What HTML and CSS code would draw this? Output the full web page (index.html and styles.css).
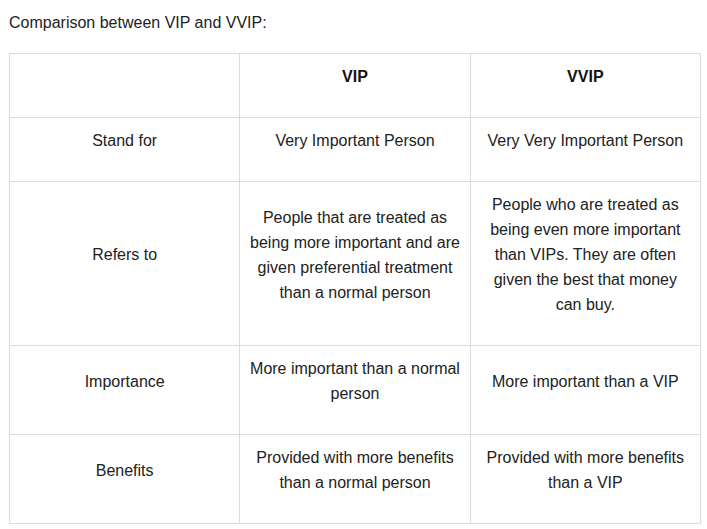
FILE: index.html
```html
<!DOCTYPE html>
<html>
<head>
<meta charset="utf-8">
<link rel="stylesheet" href="styles.css">
</head>
<body>
<div class="page">
  <p class="intro">Comparison between VIP and VVIP:</p>
  <table class="cmp">
    <colgroup><col class="c"><col class="c"><col class="c"></colgroup>
    <tr>
      <td><p></p></td>
      <td><p><strong>VIP</strong></p></td>
      <td><p><strong>VVIP</strong></p></td>
    </tr>
    <tr>
      <td><p>Stand for</p></td>
      <td><p>Very Important Person</p></td>
      <td><p>Very Very Important Person</p></td>
    </tr>
    <tr>
      <td><p>Refers to</p></td>
      <td><p>People that are treated as being more important and are given preferential treatment than a normal person</p></td>
      <td><p>People who are treated as being even more important than VIPs. They are often given the best that money can buy.</p></td>
    </tr>
    <tr>
      <td><p>Importance</p></td>
      <td><p>More important than a normal person</p></td>
      <td><p>More important than a VIP</p></td>
    </tr>
    <tr>
      <td><p>Benefits</p></td>
      <td><p>Provided with more benefits than a normal person</p></td>
      <td><p>Provided with more benefits than a VIP</p></td>
    </tr>
  </table>
</div>
</body>
</html>
```
FILE: styles.css
```css
html, body {
  margin: 0;
  padding: 0;
  background: #fff;
}
.page {
  padding: 10px 6px 0 9px;
  font-family: "Liberation Sans", Arial, sans-serif;
  font-size: 16px;
  line-height: 25px;
  color: #222;
}
.page p {
  margin: 0 0 18px 0;
  min-height: 25px;
}
.intro {
  text-align: left;
}
.cmp {
  width: 692px;
  border-collapse: collapse;
  table-layout: fixed;
}
.cmp td {
  border: 1px solid #dcdcdc;
  padding: 10px 8px;
  text-align: center;
  vertical-align: middle;
}
.cmp strong {
  font-weight: 700;
  color: #111;
}
```
